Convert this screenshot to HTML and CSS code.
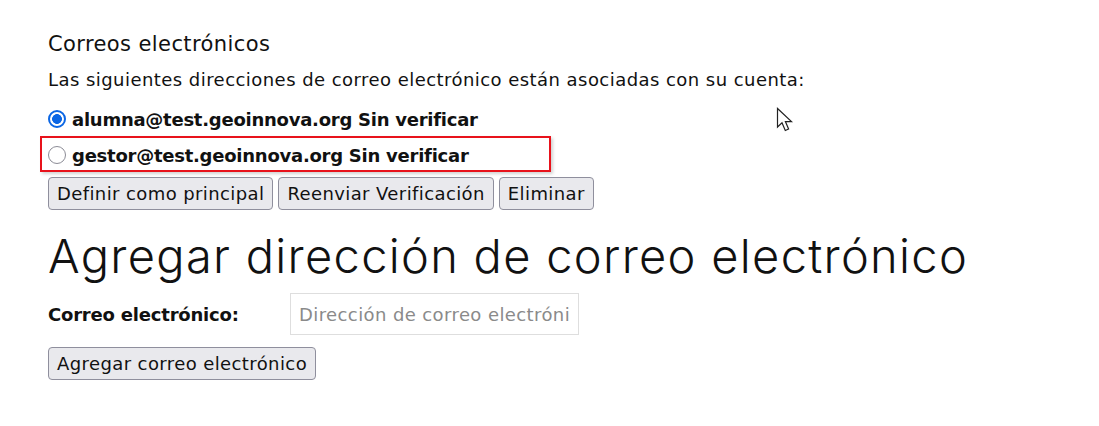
FILE: index.html
```html
<!DOCTYPE html>
<html lang="es">
<head>
<meta charset="utf-8">
<title>Correos electrónicos</title>
<link rel="stylesheet" href="styles.css">
</head>
<body>
<main class="page">
  <h3 class="section-title">Correos electrónicos</h3>
  <p class="intro">Las siguientes direcciones de correo electrónico están asociadas con su cuenta:</p>
  <div class="email-list">
    <label class="email-row"><input type="radio" name="email" class="radio" checked><span class="email-text">alumna@test.geoinnova.org Sin verificar</span></label>
    <label class="email-row"><input type="radio" name="email" class="radio"><span class="email-text">gestor@test.geoinnova.org Sin verificar</span></label>
  </div>
  <div class="actions">
    <button class="btn">Definir como principal</button>
    <button class="btn">Reenviar Verificación</button>
    <button class="btn">Eliminar</button>
  </div>
  <h1 class="add-title">Agregar dirección de correo electrónico</h1>
  <div class="field">
    <label class="field-label" for="email">Correo electrónico:</label>
    <input id="email" class="field-input" type="email" placeholder="Dirección de correo electrónico">
  </div>
  <button class="btn">Agregar correo electrónico</button>
</main>
<div class="highlight"></div>
<svg class="cursor" width="20" height="28" viewBox="0 0 20 28"><path d="M1.5 1.5 L1.5 20 L6 15.8 L9.3 23.5 L12.6 22 L9.4 14.6 L15.5 14.6 Z" fill="#fff" stroke="#222" stroke-width="1.2" stroke-linejoin="miter"/></svg>
</body>
</html>
```

FILE: styles.css
```css
html, body {
  margin: 0;
  padding: 0;
  background: #fff;
}
body {
  font-family: "DejaVu Sans", "Open Sans", sans-serif;
  color: #111;
  position: relative;
  min-height: 426px;
}
.page {
  padding: 28px 0 0 48px;
}
.section-title {
  font-size: 21px;
  font-weight: 400;
  letter-spacing: 0.4px;
  margin: 0 0 8px 0;
  line-height: 32px;
}
.intro {
  font-size: 18px;
  letter-spacing: 0.45px;
  margin: 0 0 9px 0;
  line-height: 24px;
}
.email-list {
  display: flex;
  flex-direction: column;
}
.email-row {
  display: flex;
  align-items: center;
  gap: 6px;
  height: 36px;
  font-size: 18px;
  font-weight: 700;
  letter-spacing: -0.25px;
}
.radio {
  appearance: none;
  -webkit-appearance: none;
  box-sizing: border-box;
  margin: 0;
  width: 18px;
  height: 18px;
  border-radius: 50%;
  border: 1.5px solid #8c8c96;
  background: #fff;
  flex: none;
}
.radio:checked {
  border: 2px solid #0b66e4;
  background: radial-gradient(circle, #0b66e4 0 4.6px, #fff 5.2px);
}
.actions {
  display: flex;
  gap: 5px;
  margin-top: 4px;
}
.btn {
  font-family: inherit;
  font-size: 18px;
  letter-spacing: 0.4px;
  color: #111;
  background: #e9e9ed;
  border: 1px solid #8f8f9d;
  border-radius: 4px;
  padding: 3px 8px;
  height: 33px;
  line-height: 24px;
}
.add-title {
  font-family: "Inter", "Open Sans", sans-serif;
  font-size: 47px;
  font-weight: 300;
  letter-spacing: 1.3px;
  margin: 16px 0 7px 0;
  line-height: 60px;
}
.field {
  display: flex;
  align-items: center;
  margin-bottom: 12px;
}
.field-label {
  font-size: 18px;
  font-weight: 700;
  letter-spacing: -0.2px;
  width: 242px;
}
.field-input {
  font-family: inherit;
  font-size: 18px;
  letter-spacing: 0.4px;
  width: 289px;
  height: 42px;
  box-sizing: border-box;
  border: 1px solid #dedede;
  padding: 0 8px;
  color: #111;
}
.field-input::placeholder {
  color: #8a8a8a;
}
.highlight {
  position: absolute;
  left: 40px;
  top: 136px;
  width: 507px;
  height: 32px;
  border: 2px solid #e8121b;
  box-shadow: 2px 2px 3px rgba(0,0,0,0.18);
}
.cursor {
  position: absolute;
  left: 776px;
  top: 107px;
}
```
